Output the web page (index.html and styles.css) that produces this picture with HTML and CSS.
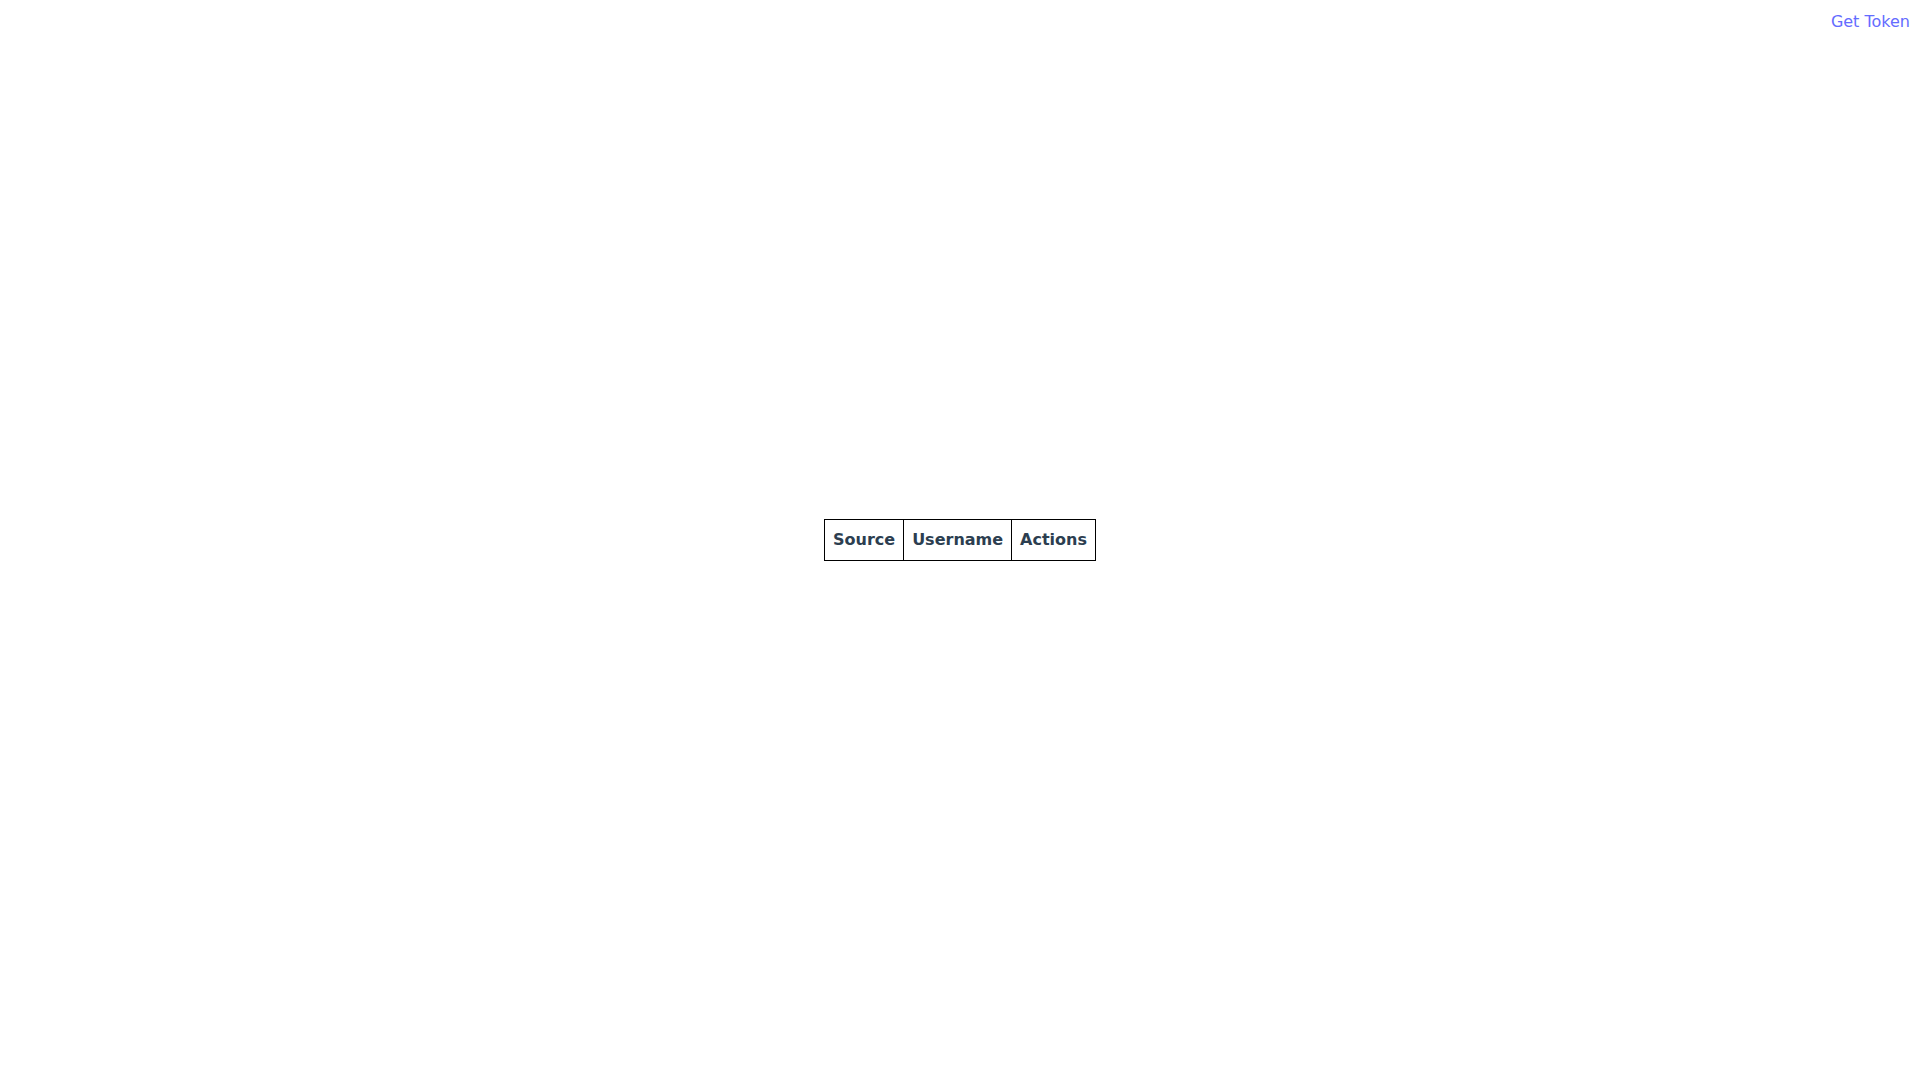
FILE: index.html
```html
<!DOCTYPE html>
<html lang="en">
<head>
<meta charset="utf-8">
<title>Tokens</title>
<link rel="stylesheet" href="styles.css">
</head>
<body>
<div class="app">
  <nav class="topbar"><a class="token-link" href="#">Get Token</a></nav>
  <main class="content">
    <table class="accounts">
      <thead>
        <tr><th>Source</th><th>Username</th><th>Actions</th></tr>
      </thead>
      <tbody></tbody>
    </table>
  </main>
</div>
</body>
</html>
```
FILE: styles.css
```css
html, body {
  margin: 0;
  padding: 0;
  height: 100%;
  background: #ffffff;
}
body {
  font-family: "DejaVu Sans", sans-serif;
  font-size: 16px;
  line-height: 1.5;
  color: #2c3e50;
}
.app {
  display: grid;
  grid-template: 100vh / 100vw;
}
.topbar {
  grid-area: 1 / 1;
  align-self: start;
  justify-self: end;
  padding: 10px 10px 0 0;
}
.token-link {
  color: #646cff;
  text-decoration: none;
}
.content {
  grid-area: 1 / 1;
  display: flex;
  align-items: center;
  justify-content: center;
}
.accounts {
  border-collapse: collapse;
}
.accounts th {
  border: 1px solid #000;
  padding: 8px;
  font-weight: bold;
}
```
